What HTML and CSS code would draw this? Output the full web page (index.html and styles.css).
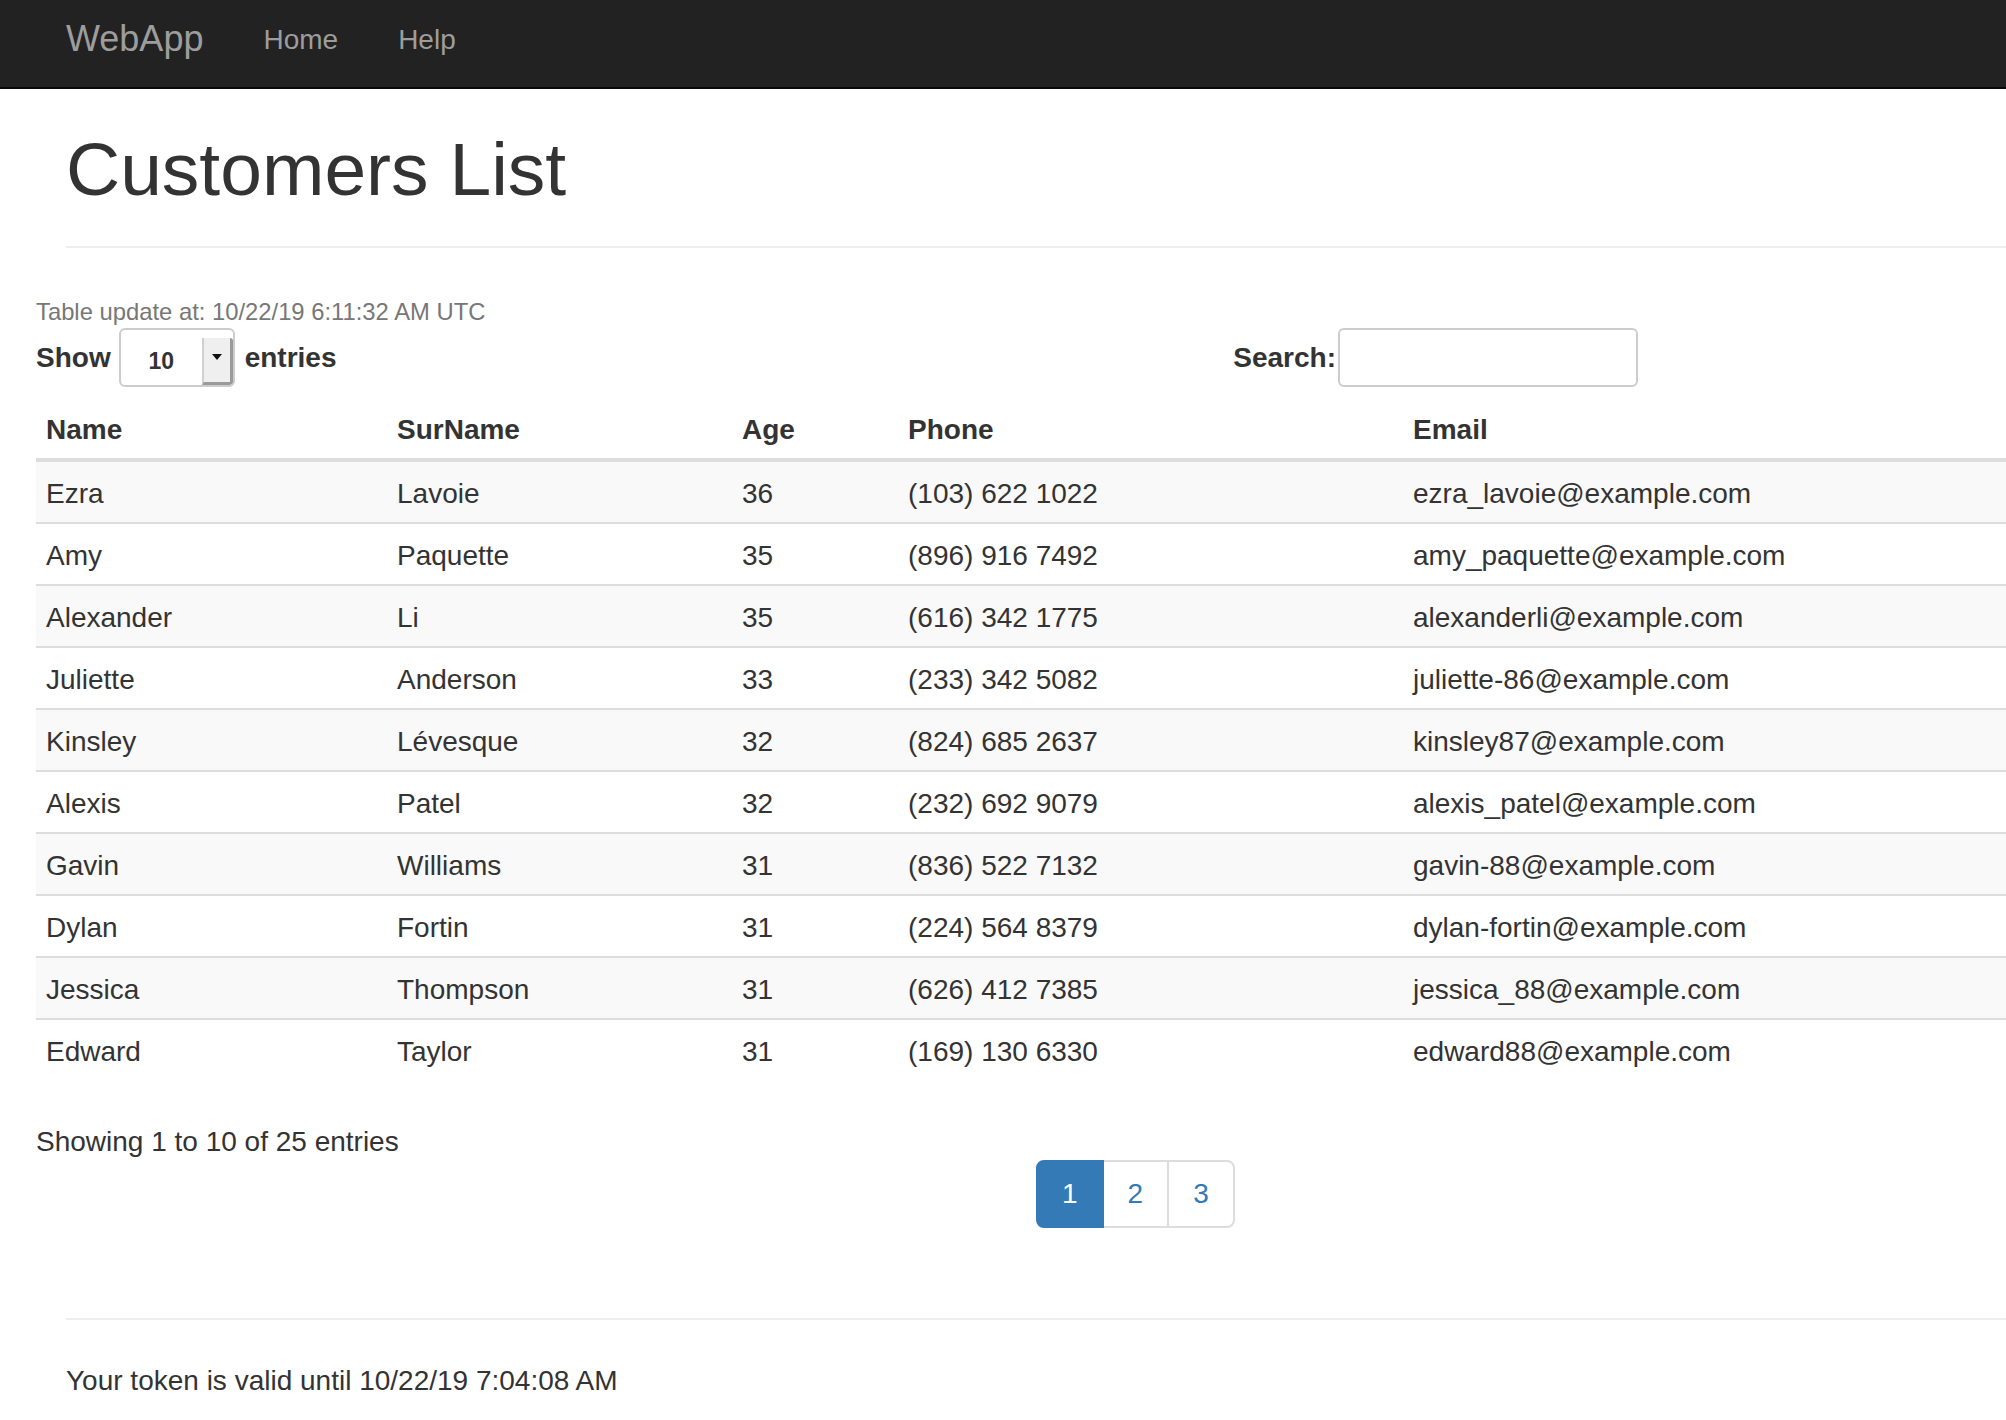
FILE: index.html
```html
<!DOCTYPE html>
<html lang="en">
<head>
<meta charset="utf-8">
<title>Customers List - WebApp</title>
<link rel="stylesheet" href="styles.css">
</head>
<body>
<nav class="navbar">
  <a class="brand" href="#">WebApp</a>
  <a class="nav-link" href="#">Home</a>
  <a class="nav-link" href="#">Help</a>
</nav>

<div class="page-header">
  <h1>Customers List</h1>
</div>

<div class="dt-wrapper">
  <div class="dt-updated"><small>Table update at: 10/22/19 6:11:32 AM UTC</small></div>
  <div class="dt-top">
    <div class="dt-length">
      <span>Show</span>
      <span class="select"><span class="select-value">10</span><span class="select-btn"><span class="caret"></span></span></span>
      <span>entries</span>
    </div>
    <div class="dt-filter">
      <span>Search:</span><span class="search-input"></span>
    </div>
  </div>

  <table class="table">
    <colgroup>
      <col class="c-name"><col class="c-surname"><col class="c-age"><col class="c-phone"><col class="c-email">
    </colgroup>
    <thead>
      <tr><th>Name</th><th>SurName</th><th>Age</th><th>Phone</th><th>Email</th></tr>
    </thead>
    <tbody>
      <tr><td>Ezra</td><td>Lavoie</td><td>36</td><td>(103) 622 1022</td><td>ezra_lavoie@example.com</td></tr>
      <tr><td>Amy</td><td>Paquette</td><td>35</td><td>(896) 916 7492</td><td>amy_paquette@example.com</td></tr>
      <tr><td>Alexander</td><td>Li</td><td>35</td><td>(616) 342 1775</td><td>alexanderli@example.com</td></tr>
      <tr><td>Juliette</td><td>Anderson</td><td>33</td><td>(233) 342 5082</td><td>juliette-86@example.com</td></tr>
      <tr><td>Kinsley</td><td>Lévesque</td><td>32</td><td>(824) 685 2637</td><td>kinsley87@example.com</td></tr>
      <tr><td>Alexis</td><td>Patel</td><td>32</td><td>(232) 692 9079</td><td>alexis_patel@example.com</td></tr>
      <tr><td>Gavin</td><td>Williams</td><td>31</td><td>(836) 522 7132</td><td>gavin-88@example.com</td></tr>
      <tr><td>Dylan</td><td>Fortin</td><td>31</td><td>(224) 564 8379</td><td>dylan-fortin@example.com</td></tr>
      <tr><td>Jessica</td><td>Thompson</td><td>31</td><td>(626) 412 7385</td><td>jessica_88@example.com</td></tr>
      <tr><td>Edward</td><td>Taylor</td><td>31</td><td>(169) 130 6330</td><td>edward88@example.com</td></tr>
    </tbody>
  </table>

  <div class="dt-info">Showing 1 to 10 of 25 entries</div>
  <ul class="pagination">
    <li class="active"><a href="#">1</a></li>
    <li><a href="#">2</a></li>
    <li><a href="#">3</a></li>
  </ul>
</div>

<footer class="footer">
  <p>Your token is valid until 10/22/19 7:04:08 AM</p>
</footer>
</body>
</html>
```

FILE: styles.css
```css
html, body {
  margin: 0;
  padding: 0;
}
body {
  font-family: "Liberation Sans", Arial, Helvetica, sans-serif;
  font-size: 28px;
  line-height: 40px;
  color: #333;
  background: #fff;
  overflow-x: hidden;
}
a { text-decoration: none; }

/* navbar */
.navbar {
  display: flex;
  align-items: flex-start;
  height: 87px;
  background: #222;
  border-bottom: 2px solid #080808;
  padding-left: 36px;
}
.brand {
  font-size: 36px;
  line-height: 40px;
  padding: 19px 30px 0;
  color: #9d9d9d;
}
.nav-link {
  font-size: 28px;
  line-height: 40px;
  padding: 20px 30px 0;
  color: #9d9d9d;
}

/* header */
.page-header {
  margin: 39px 0 0 66px;
  padding-bottom: 36px;
  border-bottom: 2px solid #eee;
}
.page-header h1 {
  margin: 0;
  font-size: 75px;
  line-height: 82px;
  font-weight: 500;
  color: #333;
}

/* datatable wrapper */
.dt-wrapper {
  margin: 40px 0 0 36px;
  width: 1602px;
}
.dt-updated {
  line-height: 40px;
  height: 37px;
  padding-top: 3px;
}
.dt-updated small {
  font-size: 23.8px;
  color: #777;
}
.dt-top {
  display: flex;
  justify-content: space-between;
  align-items: center;
  height: 59px;
  font-weight: bold;
}
.dt-length {
  display: flex;
  align-items: center;
}
.dt-length .select {
  margin: 0 10px 0 8px;
}
.select {
  display: flex;
  box-sizing: border-box;
  width: 116px;
  height: 59px;
  border: 2px solid #ccc;
  border-radius: 6px;
  overflow: hidden;
  background: #fff;
}
.select-value {
  flex: 1;
  text-align: center;
  font-size: 23px;
  line-height: 57px;
  padding-top: 3px;
  color: #333;
}
.select-btn {
  width: 26px;
  display: flex;
  align-items: center;
  justify-content: center;
  background: #efefef;
  border-left: 2px solid #d0d0d0;
  border-right: 3px solid #9a9a9a;
  border-bottom: 3px solid #9a9a9a;
  margin-top: 8px;
  border-top-right-radius: 3px;
  border-bottom-right-radius: 3px;
}
.caret {
  width: 0;
  height: 0;
  border-left: 5px solid transparent;
  border-right: 5px solid transparent;
  border-top: 6px solid #111;
  margin-top: -6px;
}
.dt-filter {
  display: flex;
  align-items: center;
}
.search-input {
  display: block;
  box-sizing: border-box;
  width: 300px;
  height: 59px;
  margin-left: 2px;
  border: 2px solid #ccc;
  border-radius: 6px;
  background: #fff;
}

/* table */
.table {
  margin-top: 11px;
  width: 1970px;
  table-layout: fixed;
  border-collapse: separate;
  border-spacing: 0;
}
.c-name { width: 351px; }
.c-surname { width: 345px; }
.c-age { width: 166px; }
.c-phone { width: 505px; }
.c-email { width: 603px; }
.table th {
  text-align: left;
  font-weight: bold;
  padding: 12px 10px 8px;
  line-height: 40px;
  border-bottom: 4px solid #ddd;
  white-space: nowrap;
}
.table td {
  padding: 12px 10px 8px;
  line-height: 40px;
  border-top: 2px solid #ddd;
  white-space: nowrap;
}
.table tbody tr:first-child td {
  border-top: 0;
}
.table tbody tr:nth-child(odd) td {
  background: #f9f9f9;
}

/* info + pagination */
.dt-info {
  padding-top: 42px;
  line-height: 40px;
}
.pagination {
  display: flex;
  list-style: none;
  margin: -2px 0 0 0;
  padding: 0 0 0 1000px;
}
.pagination li a {
  display: block;
  padding: 12px 24px;
  line-height: 40px;
  font-size: 28px;
  color: #337ab7;
  background: #fff;
  border: 2px solid #ddd;
  margin-left: -2px;
}
.pagination li:first-child a {
  margin-left: 0;
  border-top-left-radius: 8px;
  border-bottom-left-radius: 8px;
}
.pagination li:last-child a {
  border-top-right-radius: 8px;
  border-bottom-right-radius: 8px;
}
.pagination li.active a {
  position: relative;
  z-index: 1;
  color: #fff;
  background: #337ab7;
  border-color: #337ab7;
}

/* footer */
.footer {
  margin: 90px 0 0 66px;
  border-top: 2px solid #eee;
  padding-top: 41px;
}
.footer p {
  margin: 0;
  line-height: 40px;
}
```
